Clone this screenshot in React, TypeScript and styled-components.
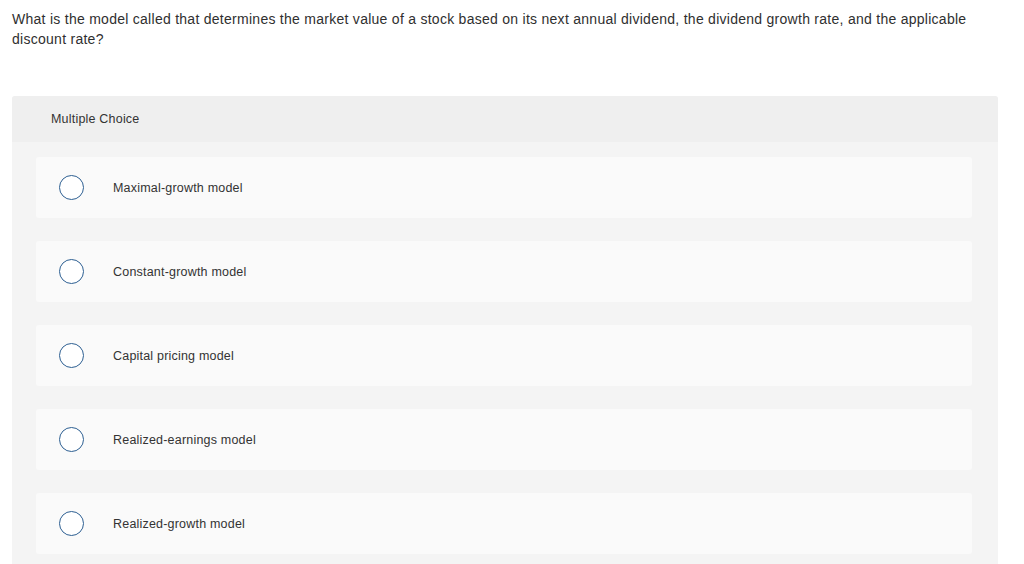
import styled, { createGlobalStyle } from 'styled-components';

const GlobalStyle = createGlobalStyle`
  body {
    margin: 0;
    background: #ffffff;
    font-family: "Liberation Sans", Arial, sans-serif;
    color: #333333;
  }
`;

const Page = styled.div`
  padding: 9px 12px 0 12px;
  width: 986px;
`;

const Question = styled.p`
  margin: 0 0 47px;
  font-size: 14px;
  line-height: 20px;
  letter-spacing: 0.27px;
  color: #2f2f2f;
`;

const Panel = styled.section`
  background: #f4f4f4;
  border-radius: 3px 3px 0 0;
  overflow: hidden;
`;

const PanelHeader = styled.div`
  display: flex;
  align-items: center;
  height: 46px;
  padding-left: 39px;
  background: #efefef;
  font-size: 12.5px;
  letter-spacing: 0.2px;
  color: #333333;
`;

const OptionList = styled.div`
  display: flex;
  flex-direction: column;
  gap: 23px;
  padding: 15px 26px 40px 24px;
`;

const Option = styled.label`
  display: flex;
  align-items: center;
  height: 61px;
  padding-left: 23px;
  background: #fafafa;
  border-radius: 3px;
  cursor: pointer;
`;

const Radio = styled.span`
  box-sizing: border-box;
  width: 25px;
  height: 25px;
  border-radius: 50%;
  border: 1.5px solid #2d5f92;
  background: #ffffff;
  flex-shrink: 0;
`;

const OptionText = styled.span`
  margin-left: 29px;
  font-size: 12.5px;
  letter-spacing: 0.2px;
  color: #333333;
`;

const options = [
  'Maximal-growth model',
  'Constant-growth model',
  'Capital pricing model',
  'Realized-earnings model',
  'Realized-growth model',
];

const App = () => {
  return (
    <Page>
      <GlobalStyle />
      <Question>
        What is the model called that determines the market value of a stock based on its next
        annual dividend, the dividend growth rate, and the applicable discount rate?
      </Question>
      <Panel>
        <PanelHeader>Multiple Choice</PanelHeader>
        <OptionList>
          {options.map((text) => (
            <Option key={text}>
              <Radio />
              <OptionText>{text}</OptionText>
            </Option>
          ))}
        </OptionList>
      </Panel>
    </Page>
  );
};

export default App;
